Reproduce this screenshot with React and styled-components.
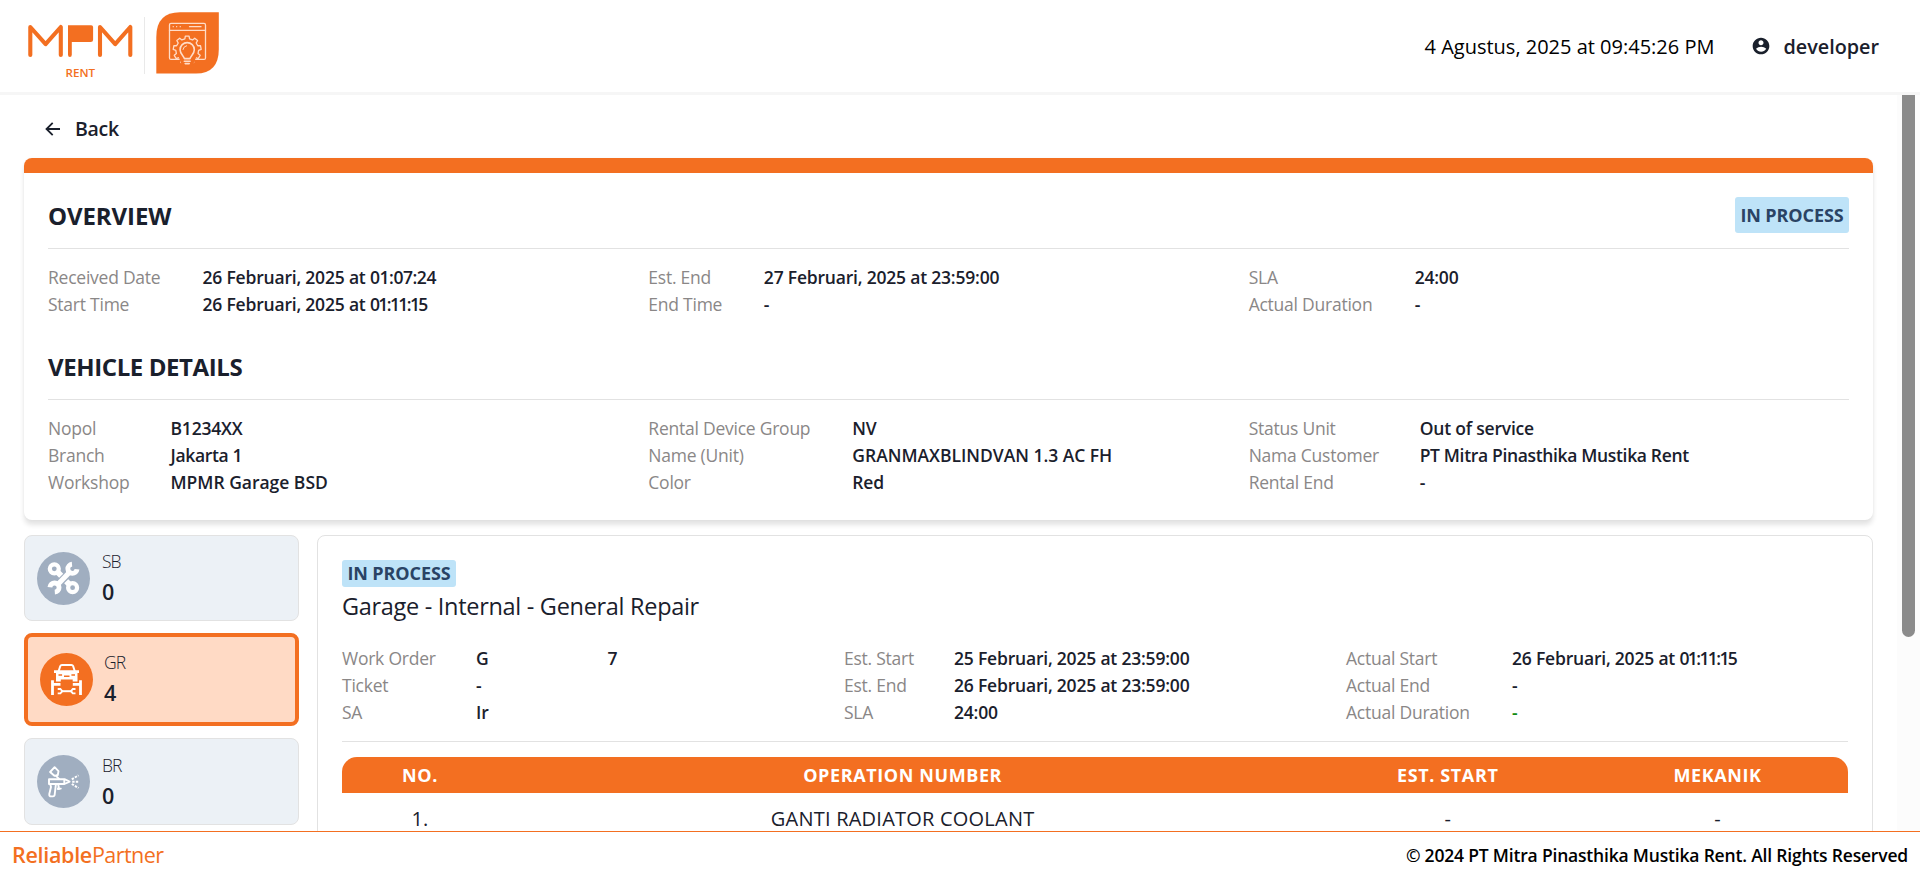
import React from 'react';
import styled, { createGlobalStyle, css } from 'styled-components';
import { RiAccountCircleFill } from 'react-icons/ri';

const ORANGE = '#f36f21';
const INK = '#1a202c';
const LINE = '#e2e2e2';

const GlobalStyle = createGlobalStyle`
  *, *::before, *::after { box-sizing: border-box; }
  html, body { margin: 0; padding: 0; }
  body {
    background: #fff;
    color: ${INK};
    font-family: 'Open Sans', 'Noto Sans', sans-serif;
    overflow: hidden;
  }
  h2, h3, p { margin: 0; }
  svg { display: block; flex: none; }
`;

const Page = styled.div`
  display: flex;
  flex-direction: column;
  height: 877px;
  overflow: hidden;
`;

/* ---------- header ---------- */

const Header = styled.header`
  display: flex;
  align-items: center;
  justify-content: space-between;
  flex: none;
  height: 95px;
  padding-right: 41px;
  border-bottom: 3px solid #f6f6f6;
`;

const HeaderInfo = styled.div`
  display: flex;
  align-items: center;
  font-size: 20px;
  line-height: 30px;
`;

const Clock = styled.span`
  color: #000;
  padding-top: 2px;
  margin-right: 37px;
`;

const UserName = styled.span`
  margin-left: 12px;
  padding-top: 2px;
  font-size: 19.8px;
  font-weight: 600;
`;

/* ---------- body ---------- */

const Body = styled.div`
  display: flex;
  flex: 1;
  min-height: 0;
`;

const Main = styled.main`
  flex: 1;
  min-width: 0;
  padding: 19px 24px 0;
  overflow: hidden;
`;

const ScrollTrack = styled.div`
  flex: none;
  width: 23px;
  padding-left: 5px;
  background: #fcfcfc;
`;

const ScrollThumb = styled.div`
  width: 13px;
  height: 542px;
  border-radius: 0 0 7px 7px;
  background: #8b8b8b;
`;

const BackLink = styled.div`
  display: flex;
  align-items: center;
  gap: 14px;
  height: 30px;
  margin: 0 0 14px 21px;
  font-size: 19.5px;
  font-weight: 600;
  letter-spacing: -0.3px;
  line-height: 32px;
`;

const Card = styled.section`
  border-top: 15px solid ${ORANGE};
  border-radius: 8px;
  padding: 24px;
  height: 362px;
  box-shadow: 0 5px 5px rgba(0, 0, 0, 0.11), 0 0 3px rgba(0, 0, 0, 0.04);
`;

const SectionHead = styled.div`
  display: flex;
  justify-content: space-between;
  height: 51px;
  margin-top: ${(p) => p.$gap || 0}px;
  margin-bottom: 16px;
  padding-bottom: 15px;
  box-shadow: 0 1px 0 ${LINE};
`;

const SectionTitle = styled.h2`
  font-size: 24px;
  line-height: 38px;
  font-weight: 700;
  letter-spacing: ${(p) => p.$tracking || 0}px;
`;

const Badge = styled.span`
  display: inline-flex;
  align-items: center;
  justify-content: center;
  width: 114px;
  height: ${(p) => (p.$tall ? 36 : 27)}px;
  border-radius: 3px;
  background: #bee3f8;
  color: #2a4365;
  font-size: 18px;
  line-height: 27px;
  font-weight: 700;
  letter-spacing: -0.1px;
  white-space: nowrap;
`;

const FieldColumns = styled.div`
  display: grid;
  grid-template-columns: repeat(3, 1fr);
`;

const FieldGroup = styled.div`
  display: grid;
  grid-template-columns: ${(p) => p.$label}px 1fr;
  grid-auto-rows: 27px;
  font-size: 17.5px;
  line-height: 27px;
  white-space: nowrap;
`;

const Label = styled.span`
  color: #8a8787;
  letter-spacing: -0.24px;
`;

const tracking = { caps: -0.02, long: -0.34 };

const Value = styled.span`
  font-weight: 600;
  letter-spacing: ${(p) => tracking[p.$kind] ?? -0.2}px;
  ${(p) => p.$kind === 'positive' && css`color: #118a11;`}
`;

const NarrowTime = styled.span`
  letter-spacing: ${(p) => p.$by}px;
`;

const Split = styled.span`
  display: flex;
  gap: 119px;
`;

/* ---------- work area ---------- */

const WorkArea = styled.div`
  display: flex;
  align-items: stretch;
  gap: 18px;
  margin-top: 15px;
`;

const Tiles = styled.aside`
  display: flex;
  flex-direction: column;
  gap: 12px;
  flex: none;
  width: 275px;
`;

const Tile = styled.div`
  display: flex;
  align-items: center;
  gap: 12px;
  flex: none;
  height: 86px;
  padding: 0 12px;
  border-radius: 8px;
  border: 1px solid ${LINE};
  background: #ecf1f6;

  &:last-child { height: 87px; }

  ${(p) => p.$active && css`
    height: 93px;
    gap: 11px;
    padding-bottom: 1px;
    border: 4px solid ${ORANGE};
    background: #ffdac5;
  `}
`;

const TileText = styled.div`
  display: flex;
  flex-direction: column;
`;

const TileCode = styled.span`
  font-size: 17.5px;
  line-height: 27px;
  font-weight: 300;
  letter-spacing: -1px;
`;

const TileCount = styled.span`
  font-size: 21.5px;
  line-height: 33px;
  font-weight: 600;
`;

const Panel = styled.section`
  flex: 1;
  height: 420px;
  padding: 24px;
  border: 1px solid ${LINE};
  border-radius: 8px;
`;

const PanelTitle = styled.h3`
  margin-bottom: 20px;
  font-size: 23.5px;
  line-height: 38px;
  font-weight: 400;
  letter-spacing: -0.3px;
`;

const Divider = styled.div`
  height: 1px;
  margin: 15px 0;
  background: ${LINE};
`;

const TableRow = styled.div`
  display: grid;
  grid-template-columns: 154fr 812fr 279fr 261fr;
  text-align: center;
  padding: 14px 0 0 1px;
  font-size: 20px;
  line-height: 24px;
  letter-spacing: 0.22px;
`;

const TableHead = styled(TableRow)`
  padding: 0 0 0 1px;
  border-radius: 15px 15px 0 0;
  background: ${ORANGE};
  color: #fff;
  font-size: 18px;
  font-weight: 700;
  line-height: 37px;
  height: 36px;
  letter-spacing: 0.6px;
`;

/* ---------- footer ---------- */

const Footer = styled.footer`
  display: flex;
  align-items: center;
  justify-content: space-between;
  flex: none;
  height: 46px;
  padding: 0 12px;
  border-top: 1px solid ${ORANGE};
`;

const Brand = styled.span`
  color: ${ORANGE};
  font-size: 21.5px;
  letter-spacing: -0.55px;
`;

const BrandStrong = styled.span`
  font-weight: 600;
  letter-spacing: -0.3px;
`;

const Copyright = styled.span`
  color: #000;
  font-size: 17.5px;
  font-weight: 600;
  letter-spacing: -0.19px;
`;

/* ---------- drawings ---------- */

function gearPath(cx, cy, teeth, outer, inner) {
  const points = [];
  const step = (Math.PI * 2) / teeth;
  for (let i = 0; i < teeth; i += 1) {
    const a = i * step - Math.PI / 2;
    [[-0.3, inner], [-0.19, outer], [0.19, outer], [0.3, inner]].forEach(([k, r]) => {
      points.push(`${(cx + r * Math.cos(a + k * step)).toFixed(2)} ${(cy + r * Math.sin(a + k * step)).toFixed(2)}`);
    });
  }
  return `M${points.join('L')}Z`;
}

const Logo = () => (
  <svg width="230" height="92" viewBox="0 0 230 92" fill="none">
    <g stroke={ORANGE} strokeWidth="4.1" strokeLinecap="round" strokeLinejoin="round">
      <path d="M30.3 55V27L45.6 44.2L60.8 27V55" />
      <path d="M100 55V27L115.2 44.2L130.3 27V55" />
    </g>
    <path d="M68 25.2h23.2q1.9 0 1.9 1.9v12.6q0 2.4-2.4 2.4H71.8v12.6q0 2.2-1.9 2.2t-1.9-2.2z" fill={ORANGE} />
    <text x="65.6" y="77" fill={ORANGE} fontSize="11.4" fontWeight="600" textLength="29.5" lengthAdjust="spacingAndGlyphs">RENT</text>
    <path d="M144.5 17v57" stroke="#e9e9e9" />
    <path d="M156.3 73.6V37Q156.3 12.3 180 12.3H218.8V49Q218.8 73.6 196 73.6Z" fill={ORANGE} />
    <g stroke="#ffdcc8" strokeWidth="1.3" strokeLinecap="round" strokeLinejoin="round">
      <rect x="169.5" y="23.4" width="36" height="36" rx="1.5" />
      <path d="M169.5 30.4h36" />
      <path d="M173.2 26.7h.1M176.6 26.7h.1M180.2 26.7h.1M189.5 26.7h11.5" />
      <path d={gearPath(187.2, 50, 9, 14, 11.4)} fill={ORANGE} />
      <path d="M178 55L182 66H192.5L197 55z" fill={ORANGE} stroke="none" />
      <path d="M184.3 58.6c0-2.4-4.2-4-4.2-8.9a7.1 7.1 0 0 1 14.2 0c0 4.9-4.2 6.5-4.2 8.9z" fill={ORANGE} strokeWidth="1.6" />
      <path d="M184.3 61.2h5.8M185.2 63.6h4" strokeWidth="1.6" />
      <path d="M183 49.5q.5-3.2 3.6-3.8" strokeWidth="1" />
    </g>
  </svg>
);

const ArrowLeft = () => (
  <svg width="16" height="16" viewBox="0 0 16 16" fill="none" stroke={INK} strokeWidth="1.8">
    <path d="M15 8H1.5M7.7 1.8L1.5 8l6.2 6.2" />
  </svg>
);

const Disc = ({ color, children }) => (
  <svg width="53" height="53" viewBox="0 0 53 53" fill="none">
    <circle cx="26.5" cy="26.5" r="26.5" fill={color} />
    {children}
  </svg>
);

const ServiceIcon = () => (
  <Disc color="#a0aec0">
    <g stroke="#fff">
      <circle cx="17.3" cy="16.8" r="4.5" strokeWidth="4.2" />
      <circle cx="35.6" cy="35.7" r="4.5" strokeWidth="4.2" />
      <path d="M20.5 20L24.2 23.7M29.2 29.2L33 33" strokeWidth="5.8" />
      <path d="M20 33.2L33 19.8" strokeWidth="5" />
      <path d="M40 17.2A4.6 4.6 0 1 1 35 12.2" strokeWidth="4.8" />
      <path d="M12.9 35.2A4.6 4.6 0 1 1 17.8 40.2" strokeWidth="4.8" />
    </g>
  </Disc>
);

const RepairIcon = () => (
  <Disc color={ORANGE}>
    <path d="M18.6 18.3L20.3 13Q20.7 12 22 12H31.4Q32.7 12 33.1 13L34.8 18.3" stroke="#fff" strokeWidth="2" />
    <path d="M14 17.3H39V19.9H37.5V28.5H32.7V26.6H20.8V28.5H16V19.9H14z" fill="#fff" />
    <path d="M18.5 22h3.6M31.4 22H35M24 23.2h5.5" stroke={ORANGE} strokeWidth="1.5" />
    <path d="M12.5 27.3V42M40.5 27.3V42M12 31.4H20.5M32.8 31.4H41" stroke="#fff" strokeWidth="2.8" />
    <path d="M21 38.2H32.2" stroke="#fff" strokeWidth="2" />
    <path d="M17.7 36H20.4L22.3 38.2L20.4 40.4H17.7M35.5 36H32.8L30.9 38.2L32.8 40.4H35.5" stroke="#fff" strokeWidth="1.8" />
  </Disc>
);

const SprayIcon = () => (
  <Disc color="#a0aec0">
    <g stroke="#fff" strokeWidth="1.9" strokeLinejoin="round">
      <path d="M17.6 12.2L21.5 16.2L20.8 20L17.4 20.8L13.1 17z" />
      <path d="M18.5 20.3L22.5 24.3" />
      <path d="M12 24.2H27.5L32.6 26.6L27.5 29H12z" />
      <path d="M27.3 24.3V29" />
      <path d="M13.3 29.2L14 32L12.3 39Q12 41.4 14.2 41.4H16Q17.5 41.4 17.7 39.5L18.8 30" />
      <path d="M20 33.5Q22.5 34.5 24.5 33.3M21.2 29.5L22 33.5" />
    </g>
    <path d="M34.8 24.4L41.5 20.3M35.2 26.7H42M34.8 29L41.5 33" stroke="#fff" strokeWidth="2" strokeDasharray="2.4 1.2" />
  </Disc>
);

/* ---------- content ---------- */

const startTime = <>26 Februari, 2025 at <NarrowTime $by={-1.6}>01:11:15</NarrowTime></>;
const receivedTime = <>26 Februari, 2025 at <NarrowTime $by={-0.45}>01:07:24</NarrowTime></>;

const overview = [
  { label: 154.5, fields: [['Received Date', receivedTime], ['Start Time', startTime]] },
  { label: 115.5, fields: [['Est. End', '27 Februari, 2025 at 23:59:00'], ['End Time', '-']] },
  { label: 166, fields: [['SLA', '24:00'], ['Actual Duration', '-']] },
];

const vehicle = [
  { label: 122.5, fields: [['Nopol', 'B1234XX'], ['Branch', 'Jakarta 1', 'long'], ['Workshop', 'MPMR Garage BSD', 'caps']] },
  { label: 204, fields: [['Rental Device Group', 'NV'], ['Name (Unit)', 'GRANMAXBLINDVAN 1.3 AC FH', 'caps'], ['Color', 'Red']] },
  { label: 171, fields: [['Status Unit', 'Out of service'], ['Nama Customer', 'PT Mitra Pinasthika Mustika Rent', 'long'], ['Rental End', '-']] },
];

const workOrder = [
  { label: 134, fields: [['Work Order', <Split key="wo"><span>G</span><span>7</span></Split>], ['Ticket', '-'], ['SA', 'Ir']] },
  { label: 110, fields: [['Est. Start', '25 Februari, 2025 at 23:59:00'], ['Est. End', '26 Februari, 2025 at 23:59:00'], ['SLA', '24:00']] },
  { label: 166, fields: [['Actual Start', startTime], ['Actual End', '-'], ['Actual Duration', '-', 'positive']] },
];

const tiles = [
  { code: 'SB', count: 0, Icon: ServiceIcon },
  { code: 'GR', count: 4, Icon: RepairIcon, active: true },
  { code: 'BR', count: 0, Icon: SprayIcon },
];

const Fields = ({ groups }) => (
  <FieldColumns>
    {groups.map((group, i) => (
      <FieldGroup key={i} $label={group.label}>
        {group.fields.map(([label, value, kind]) => (
          <React.Fragment key={label}>
            <Label>{label}</Label>
            <Value $kind={kind}>{value}</Value>
          </React.Fragment>
        ))}
      </FieldGroup>
    ))}
  </FieldColumns>
);

export default function App() {
  return (
    <Page>
      <GlobalStyle />
      <Header>
        <Logo />
        <HeaderInfo>
          <Clock>4 Agustus, 2025 at 09:45:26 PM</Clock>
          <RiAccountCircleFill size={20} color={INK} />
          <UserName>developer</UserName>
        </HeaderInfo>
      </Header>

      <Body>
        <Main>
          <BackLink><ArrowLeft />Back</BackLink>

          <Card>
            <SectionHead>
              <SectionTitle $tracking={-0.1}>OVERVIEW</SectionTitle>
              <Badge $tall>IN PROCESS</Badge>
            </SectionHead>
            <Fields groups={overview} />
            <SectionHead $gap={30}>
              <SectionTitle $tracking={-0.4}>VEHICLE DETAILS</SectionTitle>
            </SectionHead>
            <Fields groups={vehicle} />
          </Card>

          <WorkArea>
            <Tiles>
              {tiles.map(({ code, count, Icon, active }) => (
                <Tile key={code} $active={active}>
                  <Icon />
                  <TileText>
                    <TileCode>{code}</TileCode>
                    <TileCount>{count}</TileCount>
                  </TileText>
                </Tile>
              ))}
            </Tiles>
            <Panel>
              <Badge>IN PROCESS</Badge>
              <PanelTitle>Garage - Internal - General Repair</PanelTitle>
              <Fields groups={workOrder} />
              <Divider />
              <TableHead>
                <span>NO.</span>
                <span>OPERATION NUMBER</span>
                <span>EST. START</span>
                <span>MEKANIK</span>
              </TableHead>
              <TableRow>
                <span>1.</span>
                <span>GANTI RADIATOR COOLANT</span>
                <span>-</span>
                <span>-</span>
              </TableRow>
            </Panel>
          </WorkArea>
        </Main>
        <ScrollTrack><ScrollThumb /></ScrollTrack>
      </Body>

      <Footer>
        <Brand><BrandStrong>Reliable</BrandStrong>Partner</Brand>
        <Copyright>© 2024 PT Mitra Pinasthika Mustika Rent. All Rights Reserved</Copyright>
      </Footer>
    </Page>
  );
}
